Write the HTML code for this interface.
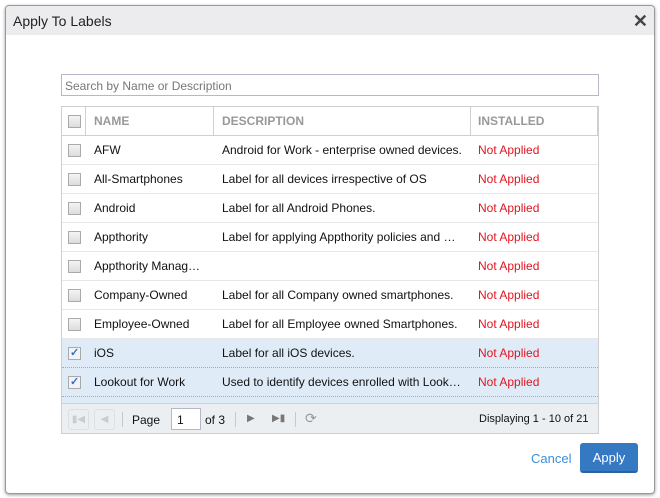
<!DOCTYPE html>
<html><head><style>
*{box-sizing:border-box;margin:0;padding:0}
body{width:660px;height:498px;background:#fff;font-family:"Liberation Sans",sans-serif;font-size:12px;color:#111;position:relative;overflow:hidden}
.dlg{position:absolute;left:5px;top:5px;width:650px;height:489px;border:1px solid #9a9a9a;border-radius:4px;background:#fff;box-shadow:0 1px 3px rgba(0,0,0,.4)}
.hd{position:absolute;left:0;top:0;width:648px;height:29px;background:#ececee;border-radius:4px 4px 0 0}
.hd span{position:absolute;left:7px;top:7px;font-size:14px;color:#222}
.x{position:absolute;right:6px;top:5px;font-size:18px;font-weight:bold;color:#444}
.search{position:absolute;left:61px;top:74px;width:538px;height:22px;border:1px solid #b5b8c8;color:#777;font-size:12px;padding:4px 3px}
.grid{position:absolute;left:61px;top:106px;width:538px;height:328px;border:1px solid #cfcfcf;overflow:hidden}
.row{position:absolute;left:0;width:536px;height:29px;border-bottom:1px solid #e6e6e6}
.row.sel{background:#dfecf8;border-bottom:1px dotted #aaa}
.c{position:absolute;top:0;height:100%;line-height:28px;white-space:nowrap;overflow:hidden}
.cb{position:absolute;left:6px;top:8px;width:13px;height:13px;border:1px solid #aaa;background:linear-gradient(#f4f4f4,#dcdcdc)}
.sel .cb{background:#f0f4fa}
.sel .cb:after{content:"✓";position:absolute;left:1px;top:-4px;font-size:11px;color:#3d6fb5;font-weight:bold;line-height:18px}
.h{top:0;height:29px;background:#fff;border-bottom:1px solid #cfcfcf}
.h .c{font-weight:bold;color:#999;line-height:29px}
.h .sep{position:absolute;top:0;width:1px;height:29px;background:#d0d0d0}
.na{left:32px;width:115px}
.de{left:160px;width:244px}
.in{left:416px;color:#e0151f}
.tb{position:absolute;left:0;top:296px;width:536px;height:31px;background:#eceff2;border-top:1px solid #d0d0d0}
.btn{position:absolute;top:5px;width:21px;height:21px;border:1px solid #dcdfe3;border-radius:3px;color:#ccc;font-size:10px;text-align:center;line-height:19px}
.vs{position:absolute;top:8px;width:1px;height:15px;background:#c8c8c8}
.t{position:absolute;top:9px}
.pg{position:absolute;left:109px;top:4px;width:30px;height:22px;border:1px solid #b5b8c8;background:#fff;padding:4px 5px}
.cancel{position:absolute;left:531px;top:451px;color:#3f8fd8;font-size:13px}
.apply{position:absolute;left:580px;top:443px;width:58px;height:30px;background:#3479c2;border-radius:3px;border-bottom:2px solid #2a63a0;color:#fff;font-size:13px;text-align:center;line-height:29px}
</style></head><body>
<div class="dlg">
<div class="hd"><span>Apply To Labels</span><div class="x">✕</div></div>
</div>
<div class="search">Search by Name or Description</div>
<div class="grid">
<div class="row h"><div class="cb"></div><div class="sep" style="left:23px"></div><div class="c na">NAME</div><div class="sep" style="left:151px"></div><div class="c de">DESCRIPTION</div><div class="sep" style="left:408px"></div><div class="c in" style="color:#999">INSTALLED</div><div class="sep" style="left:535px"></div></div>
<div class="row" style="top:29px"><div class="cb"></div><div class="c na">AFW</div><div class="c de">Android for Work - enterprise owned devices.</div><div class="c in">Not Applied</div></div>
<div class="row" style="top:58px"><div class="cb"></div><div class="c na">All-Smartphones</div><div class="c de">Label for all devices irrespective of OS</div><div class="c in">Not Applied</div></div>
<div class="row" style="top:87px"><div class="cb"></div><div class="c na">Android</div><div class="c de">Label for all Android Phones.</div><div class="c in">Not Applied</div></div>
<div class="row" style="top:116px"><div class="cb"></div><div class="c na">Appthority</div><div class="c de">Label for applying Appthority policies and …</div><div class="c in">Not Applied</div></div>
<div class="row" style="top:145px"><div class="cb"></div><div class="c na">Appthority Manag…</div><div class="c de"></div><div class="c in">Not Applied</div></div>
<div class="row" style="top:174px"><div class="cb"></div><div class="c na">Company-Owned</div><div class="c de">Label for all Company owned smartphones.</div><div class="c in">Not Applied</div></div>
<div class="row" style="top:203px"><div class="cb"></div><div class="c na">Employee-Owned</div><div class="c de">Label for all Employee owned Smartphones.</div><div class="c in">Not Applied</div></div>
<div class="row sel" style="top:232px"><div class="cb"></div><div class="c na">iOS</div><div class="c de">Label for all iOS devices.</div><div class="c in">Not Applied</div></div>
<div class="row sel" style="top:261px"><div class="cb"></div><div class="c na">Lookout for Work</div><div class="c de">Used to identify devices enrolled with Look…</div><div class="c in">Not Applied</div></div>
<div class="row sel" style="top:290px"></div>
<div class="tb">
<div class="btn" style="left:6px">▮◀</div><div class="btn" style="left:32px">◀</div>
<div class="vs" style="left:60px"></div>
<div class="t" style="left:70px">Page</div>
<div class="pg">1</div>
<div class="t" style="left:143px">of 3</div>
<div class="vs" style="left:173px"></div>
<div class="t" style="left:185px;color:#777;font-size:10px">▶</div>
<div class="t" style="left:210px;color:#777;font-size:10px">▶▮</div>
<div class="vs" style="left:233px"></div>
<div class="t" style="left:243px;color:#999;font-size:14px;top:6px">⟳</div>
<div class="t" style="left:417px;font-size:11px">Displaying 1 - 10 of 21</div>
</div>
</div>
<div class="cancel">Cancel</div>
<div class="apply">Apply</div>
</body></html>
